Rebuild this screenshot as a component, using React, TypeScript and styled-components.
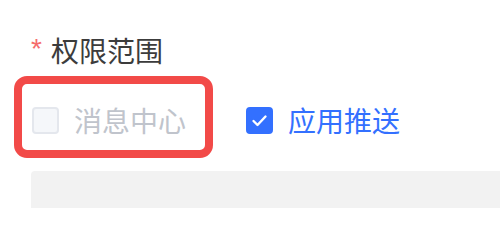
import React from "react";
import styled, { createGlobalStyle } from "styled-components";

const GlobalStyle = createGlobalStyle`
  body {
    margin: 0;
    background: #ffffff;
    font-family: "Noto Sans CJK SC", "Noto Sans", sans-serif;
  }
`;

const Page = styled.div`
  width: 500px;
  height: 208px;
  overflow: hidden;
  padding: 30px 0 0 31px;
  box-sizing: border-box;
`;

const Label = styled.div`
  display: flex;
  align-items: center;
  height: 40px;
  font-size: 28px;
  color: #3c3c3c;
`;

const Required = styled.span`
  color: #f56c6c;
  font-family: "Liberation Sans", sans-serif;
  font-size: 28px;
  margin-right: 9px;
  align-self: flex-start;
  line-height: 38px;
`;

const Row = styled.div`
  display: flex;
  align-items: center;
  gap: 60px;
  margin-top: 36px;
  padding-left: 1px;
`;

const Item = styled.label<{ $highlight?: boolean }>`
  position: relative;
  display: flex;
  align-items: center;
  gap: 15px;
  height: 28px;

  ${({ $highlight }) =>
    $highlight &&
    `
    &::after {
      content: "";
      position: absolute;
      left: -18px;
      top: -30px;
      width: 199px;
      height: 82px;
      box-sizing: border-box;
      border: 8px solid #f24a48;
      border-radius: 13px;
    }
  `}
`;

const Box = styled.span<{ $checked?: boolean }>`
  display: flex;
  align-items: center;
  justify-content: center;
  width: 27px;
  height: 27px;
  box-sizing: border-box;
  border-radius: 4px;
  border: 2px solid ${({ $checked }) => ($checked ? "#3370ff" : "#e4e7ed")};
  background: ${({ $checked }) => ($checked ? "#3370ff" : "#f5f7fa")};
`;

const Text = styled.span<{ $checked?: boolean; $disabled?: boolean }>`
  font-size: 28px;
  line-height: 28px;
  color: ${({ $checked, $disabled }) =>
    $disabled ? "#c0c4cc" : $checked ? "#3370ff" : "#333333"};
`;

const Field = styled.div`
  margin-top: 37px;
  height: 60px;
  background: #f2f2f2;
  border-radius: 4px 0 0 0;
`;

const Check = () => (
  <svg width="17" height="17" viewBox="0 0 17 17">
    <polyline
      points="2.5,9 6.5,13 14.5,4.5"
      fill="none"
      stroke="#ffffff"
      strokeWidth="2.4"
      strokeLinecap="round"
      strokeLinejoin="round"
    />
  </svg>
);

export default function App() {
  return (
    <>
      <GlobalStyle />
      <Page>
        <Label>
          <Required>*</Required>
          权限范围
        </Label>
        <Row>
          <Item $highlight>
            <Box />
            <Text $disabled>消息中心</Text>
          </Item>
          <Item>
            <Box $checked>
              <Check />
            </Box>
            <Text $checked>应用推送</Text>
          </Item>
        </Row>
        <Field />
      </Page>
    </>
  );
}
